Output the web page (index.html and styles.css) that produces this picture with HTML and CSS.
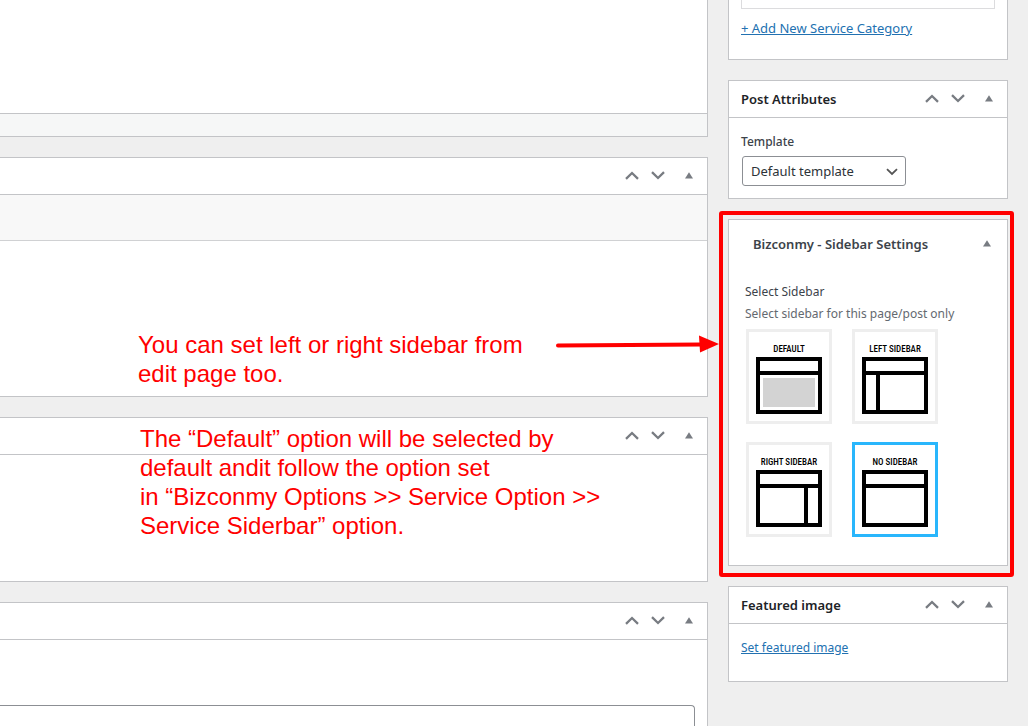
FILE: index.html
```html
<!DOCTYPE html>
<html lang="en">
<head>
<meta charset="utf-8">
<title>Edit Service</title>
<link rel="stylesheet" href="styles.css">
</head>
<body>
<svg class="defs" aria-hidden="true">
  <symbol id="up" viewBox="0 0 14 9"><path d="M1 7.800 7 2l6 5.800" fill="none" stroke="#787c82" stroke-width="2.300"/></symbol>
  <symbol id="down" viewBox="0 0 14 9"><path d="M1 1.200 7 7l6-5.800" fill="none" stroke="#787c82" stroke-width="2.300"/></symbol>
  <symbol id="toggle" viewBox="0 0 8 7"><path d="M4 .3 8 6.500H0z" fill="#787c82"/></symbol>
</svg>
<div class="page">
  <main class="main">
    <section class="box editor">
      <div class="editor-body"></div>
      <div class="editor-status"></div>
    </section>
    <section class="box panel-tools">
      <header class="head">
        <button class="move" aria-label="Move up"><svg class="chev"><use href="#up"/></svg></button>
        <button class="move" aria-label="Move down"><svg class="chev"><use href="#down"/></svg></button>
        <button class="fold" aria-label="Toggle panel"><svg class="tri"><use href="#toggle"/></svg></button>
      </header>
      <div class="toolbar"></div>
    </section>
    <section class="box panel-plain">
      <header class="head">
        <button class="move" aria-label="Move up"><svg class="chev"><use href="#up"/></svg></button>
        <button class="move" aria-label="Move down"><svg class="chev"><use href="#down"/></svg></button>
        <button class="fold" aria-label="Toggle panel"><svg class="tri"><use href="#toggle"/></svg></button>
      </header>
    </section>
    <section class="box panel-field">
      <header class="head">
        <button class="move" aria-label="Move up"><svg class="chev"><use href="#up"/></svg></button>
        <button class="move" aria-label="Move down"><svg class="chev"><use href="#down"/></svg></button>
        <button class="fold" aria-label="Toggle panel"><svg class="tri"><use href="#toggle"/></svg></button>
      </header>
      <div class="field"><textarea class="field-input" aria-label="Text"></textarea></div>
    </section>
    <p class="note note-first">You can set left or right sidebar from<br>edit page too.</p>
    <p class="note note-second">The “Default” option will be selected by<br>default andit follow the option set<br>in “Bizconmy Options &gt;&gt; Service Option &gt;&gt;<br>Service Siderbar” option.</p>
    <svg class="arrow" viewBox="0 0 164 18" aria-hidden="true"><path d="M2 10.500 145 9.500" stroke="#f00" stroke-width="4" stroke-linecap="round"/><path d="M143 0.500 163 9l-19 8.500z" fill="#f00"/></svg>
  </main>

  <aside class="side">
    <section class="box category">
      <div class="category-list"></div>
      <a class="link strong" href="#">+ Add New Service Category</a>
    </section>
    <section class="box attributes">
      <header class="head">
        <h2 class="title">Post Attributes</h2>
        <button class="move" aria-label="Move up"><svg class="chev"><use href="#up"/></svg></button>
        <button class="move" aria-label="Move down"><svg class="chev"><use href="#down"/></svg></button>
        <button class="fold" aria-label="Toggle panel"><svg class="tri"><use href="#toggle"/></svg></button>
      </header>
      <div class="attributes-body">
        <label class="label" for="template">Template</label>
        <div class="select-wrap">
          <select class="select" id="template"><option>Default template</option></select>
          <svg class="select-arrow" viewBox="0 0 12 8" aria-hidden="true"><path d="M1 1.200 6 6l5-4.800" fill="none" stroke="#555" stroke-width="1.800"/></svg>
        </div>
      </div>
    </section>
    <section class="box settings">
      <header class="settings-head">
        <h2 class="title">Bizconmy - Sidebar Settings</h2>
        <button class="fold" aria-label="Toggle panel"><svg class="tri"><use href="#toggle"/></svg></button>
      </header>
      <div class="settings-body">
        <h3 class="settings-label">Select Sidebar</h3>
        <p class="hint">Select sidebar for this page/post only</p>
        <div class="choices">
          <label class="choice"><input class="radio" type="radio" name="sidebar"><span class="choice-name">DEFAULT</span>
            <svg class="layout" viewBox="0 0 66 57"><path class="frame" d="M2 2h62v53H2zM2 16h62"/><path fill="#d3d3d3" d="M7 21h52v29H7z"/></svg></label>
          <label class="choice"><input class="radio" type="radio" name="sidebar"><span class="choice-name">LEFT SIDEBAR</span>
            <svg class="layout" viewBox="0 0 66 57"><path class="frame" d="M2 2h62v53H2zM2 16h62M16 16v39"/></svg></label>
          <label class="choice"><input class="radio" type="radio" name="sidebar"><span class="choice-name">RIGHT SIDEBAR</span>
            <svg class="layout" viewBox="0 0 66 57"><path class="frame" d="M2 2h62v53H2zM2 16h62M50 16v39"/></svg></label>
          <label class="choice"><input class="radio" type="radio" name="sidebar" checked><span class="choice-name">NO SIDEBAR</span>
            <svg class="layout" viewBox="0 0 66 57"><path class="frame" d="M2 2h62v53H2zM2 16h62"/></svg></label>
        </div>
      </div>
    </section>
    <section class="box featured">
      <header class="head">
        <h2 class="title">Featured image</h2>
        <button class="move" aria-label="Move up"><svg class="chev"><use href="#up"/></svg></button>
        <button class="move" aria-label="Move down"><svg class="chev"><use href="#down"/></svg></button>
        <button class="fold" aria-label="Toggle panel"><svg class="tri"><use href="#toggle"/></svg></button>
      </header>
      <div class="featured-body"><a class="link" href="#">Set featured image</a></div>
    </section>
  </aside>
</div>
</body>
</html>
```
FILE: styles.css
```css
* { box-sizing: border-box; }
body {
  margin: 0;
  background: #efefef;
  color: #3c434a;
  font: 13px/20px "Noto Sans", "Open Sans", sans-serif;
  overflow: hidden;
}
.defs { position: absolute; width: 0; height: 0; }
.page {
  display: grid;
  grid-template-columns: 1fr 280px;
  gap: 20px;
  min-height: 100vh;
  padding-right: 20px;
}
.main, .side { display: flex; flex-direction: column; gap: 20px; }
.main { position: relative; }
.box { background: #fff; border: 1px solid #c3c4c7; }
.main .box { border-left: 0; }
.head {
  display: flex;
  align-items: center;
  height: 37px;
  border-bottom: 1px solid #c3c4c7;
  justify-content: flex-end;
}
.title {
  flex: 1;
  margin: 0;
  padding-left: 12px;
  color: #1d2327;
  font-size: 13px;
  font-weight: 600;
  line-height: 20px;
}
.move, .fold {
  display: flex;
  align-items: center;
  justify-content: center;
  width: 26px;
  height: 36px;
  padding: 0 0 1px;
  border: 0;
  background: none;
}
.fold { width: 36px; }
.chev { width: 14px; height: 9px; }
.tri { width: 8px; height: 7px; }

.editor { border-top: 0; }
.editor-body { height: 113px; }
.editor-status { height: 23px; border-top: 1px solid #c3c4c7; background: #f6f7f7; }
.panel-tools { min-height: 240px; }
.toolbar { height: 46px; border-bottom: 1px solid #d0d1d3; background: #f8f8f8; }
.panel-plain { min-height: 165px; }
.panel-field { flex: 1; border-bottom: 0; }
.field { padding: 65px 12px 0 0; }
.field-input {
  display: block;
  width: 100%;
  height: 21px;
  border: solid #8c8f94;
  border-width: 1px 1px 0 0;
  border-radius: 0 4px 0 0;
  resize: none;
}

.note {
  position: absolute;
  margin: 0;
  color: #f00;
  font: 24px/29px "Liberation Sans", Arial, sans-serif;
  white-space: nowrap;
}
.note-first { left: 138px; top: 330px; }
.note-second { left: 140px; top: 424px; }
.arrow { position: absolute; left: 556px; top: 335px; width: 164px; height: 18px; z-index: 1; }

.link { color: #2271b1; font-size: 12px; text-decoration: underline; }
.link.strong { font-size: 13px; font-weight: 400; }
.category { padding: 0 12px 21px; border-top: 0; }
.category-list { height: 9px; margin-bottom: 9px; border: 1px solid #dcdcde; border-top: 0; }
.attributes-body { padding: 14px 12px 12px; }
.label { display: block; margin-bottom: 4px; font-size: 12px; font-weight: 500; }
.select-wrap { position: relative; width: 164px; margin-left: 1px; }
.select {
  display: block;
  width: 100%;
  height: 30px;
  padding: 0 24px 0 8px;
  border: 1px solid #8c8f94;
  border-radius: 3px;
  background: #fff;
  color: #2c3338;
  font: inherit;
  appearance: none;
}
.select-arrow { position: absolute; right: 8px; top: 12px; width: 12px; height: 8px; pointer-events: none; }

.settings { position: relative; }
.settings::after {
  content: "";
  position: absolute;
  inset: -9px -7px -12px -10px;
  border: 4px solid #f00;
  border-radius: 3px;
  pointer-events: none;
}
.settings-head { display: flex; align-items: center; height: 48px; padding: 0 2px 0 12px; }
.settings-head .title { color: #3c434a; }
.settings-body { padding: 14px 16px 28px; }
.settings-label { margin: 0; font-size: 12px; font-weight: 400; line-height: 20px; }
.hint { margin: 2px 0 5px; color: #646970; font-size: 12px; }
.choices {
  display: grid;
  grid-template-columns: 86px 86px;
  gap: 18px 20px;
  padding-left: 1px;
}
.choice {
  display: flex;
  flex-direction: column;
  align-items: center;
  height: 95px;
  padding-top: 11px;
  border: 3px solid #eee;
  background: #fff;
}
.choice:has(.radio:checked) { border-color: #29b6fc; }
.radio { position: absolute; opacity: 0; }
.choice-name {
  margin-bottom: 2px;
  color: #000;
  font: 500 9px/12px "Roboto Condensed", "Liberation Sans Narrow", "Arial Narrow", "Open Sans Condensed", sans-serif;
  white-space: nowrap;
}
.layout { display: block; width: 66px; height: 57px; }
.frame { fill: none; stroke: #000; stroke-width: 4; }
.featured-body { padding: 13px 12px 23px; }
```
